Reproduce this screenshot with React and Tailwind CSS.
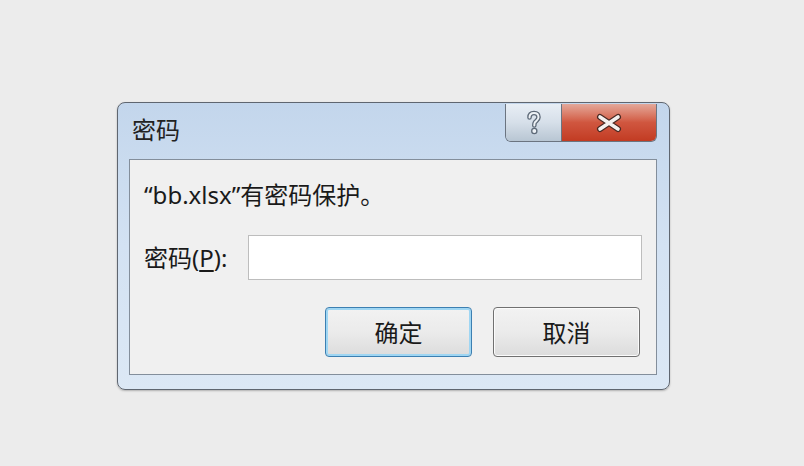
export default function App() {
  return (
    <div className="w-[804px] h-[466px] bg-[#ececec] pl-[117px] pt-[102px] font-['Noto_Sans_CJK_SC','Noto_Sans',sans-serif] text-[#1a1a1a]">
      <div className="w-[553px] h-[288px] rounded-[8px] border border-[#5f6670] bg-gradient-to-b from-[#c3d6ec] via-[#d3e2f3] to-[#dce8f5] flex flex-col shadow-[0_1px_2px_rgba(0,0,0,0.25)]">
        <div className="h-[56px] flex items-start justify-between">
          <div className="pl-[14px] pt-[11px] text-[24px] leading-[30px] text-[#222]">密码</div>
          <div className="flex mr-[12px] mt-[1px] h-[38px] rounded-b-[6px] border border-t-0 border-[#6b7480] overflow-hidden">
            <div className="w-[56px] h-full flex items-center justify-center bg-gradient-to-b from-[#e8eef5] via-[#d6dfe9] to-[#b8c6d3] border-r border-[#6b7480]">
              <svg width="16" height="26" viewBox="0 0 16 26">
                <path d="M3.5 7.5 C3.5 4 5.5 3 8 3 C11 3 12.5 4.6 12.5 7.3 C12.5 10 10 10.8 9 12.3 C8.4 13.2 8.3 14.3 8.3 15.5" fill="none" stroke="#5e6a78" strokeWidth="4.6" strokeLinecap="round" />
                <path d="M3.5 7.5 C3.5 4 5.5 3 8 3 C11 3 12.5 4.6 12.5 7.3 C12.5 10 10 10.8 9 12.3 C8.4 13.2 8.3 14.3 8.3 15.5" fill="none" stroke="#eef2f6" strokeWidth="2" strokeLinecap="round" />
                <circle cx="8.3" cy="21" r="2.6" fill="#eef2f6" stroke="#5e6a78" strokeWidth="1.3" />
              </svg>
            </div>
            <div className="w-[94px] h-full flex items-center justify-center bg-gradient-to-b from-[#e3a89a] via-[#d0563f] to-[#c23b22]">
              <svg width="28" height="20" viewBox="0 0 28 20">
                <path d="M5 4 L23 16 M23 4 L5 16" fill="none" stroke="#4a2a24" strokeWidth="6" strokeLinecap="round" />
                <path d="M5 4 L23 16 M23 4 L5 16" fill="none" stroke="#f4f0ee" strokeWidth="3.6" strokeLinecap="round" />
              </svg>
            </div>
          </div>
        </div>
        <div className="ml-[11px] mr-[12px] mb-[14px] flex-1 border border-[#838e9b] bg-[#f0f0f0] flex flex-col px-[14px]">
          <div className="pt-[19px] text-[24px] leading-[30px] whitespace-nowrap">
            <span className="font-['Noto_Sans',sans-serif]">“bb.xlsx”</span>有密码保护。
          </div>
          <div className="mt-[25px] flex items-center">
            <div className="w-[104px] text-[24px] leading-[30px] whitespace-nowrap">
              密码<span className="font-['Noto_Sans',sans-serif]">(<span className="underline underline-offset-[3px]">P</span>):</span>
            </div>
            <div className="w-[395px] h-[45px] bg-white border border-[#bdbdbd]" />
          </div>
          <div className="mt-[27px] flex justify-end gap-[21px] pr-[2px]">
            <button className="w-[147px] h-[50px] rounded-[4px] border border-[#3c7fb1] shadow-[inset_0_0_0_2px_#9fd6f3] bg-gradient-to-b from-[#f2f2f2] via-[#ebebeb] to-[#dcdcdc] text-[24px] leading-[30px]">
              确定
            </button>
            <button className="w-[147px] h-[50px] rounded-[4px] border border-[#707070] shadow-[inset_0_0_0_1px_#fbfbfb] bg-gradient-to-b from-[#f2f2f2] via-[#ebebeb] to-[#dcdcdc] text-[24px] leading-[30px]">
              取消
            </button>
          </div>
        </div>
      </div>
    </div>
  );
}
